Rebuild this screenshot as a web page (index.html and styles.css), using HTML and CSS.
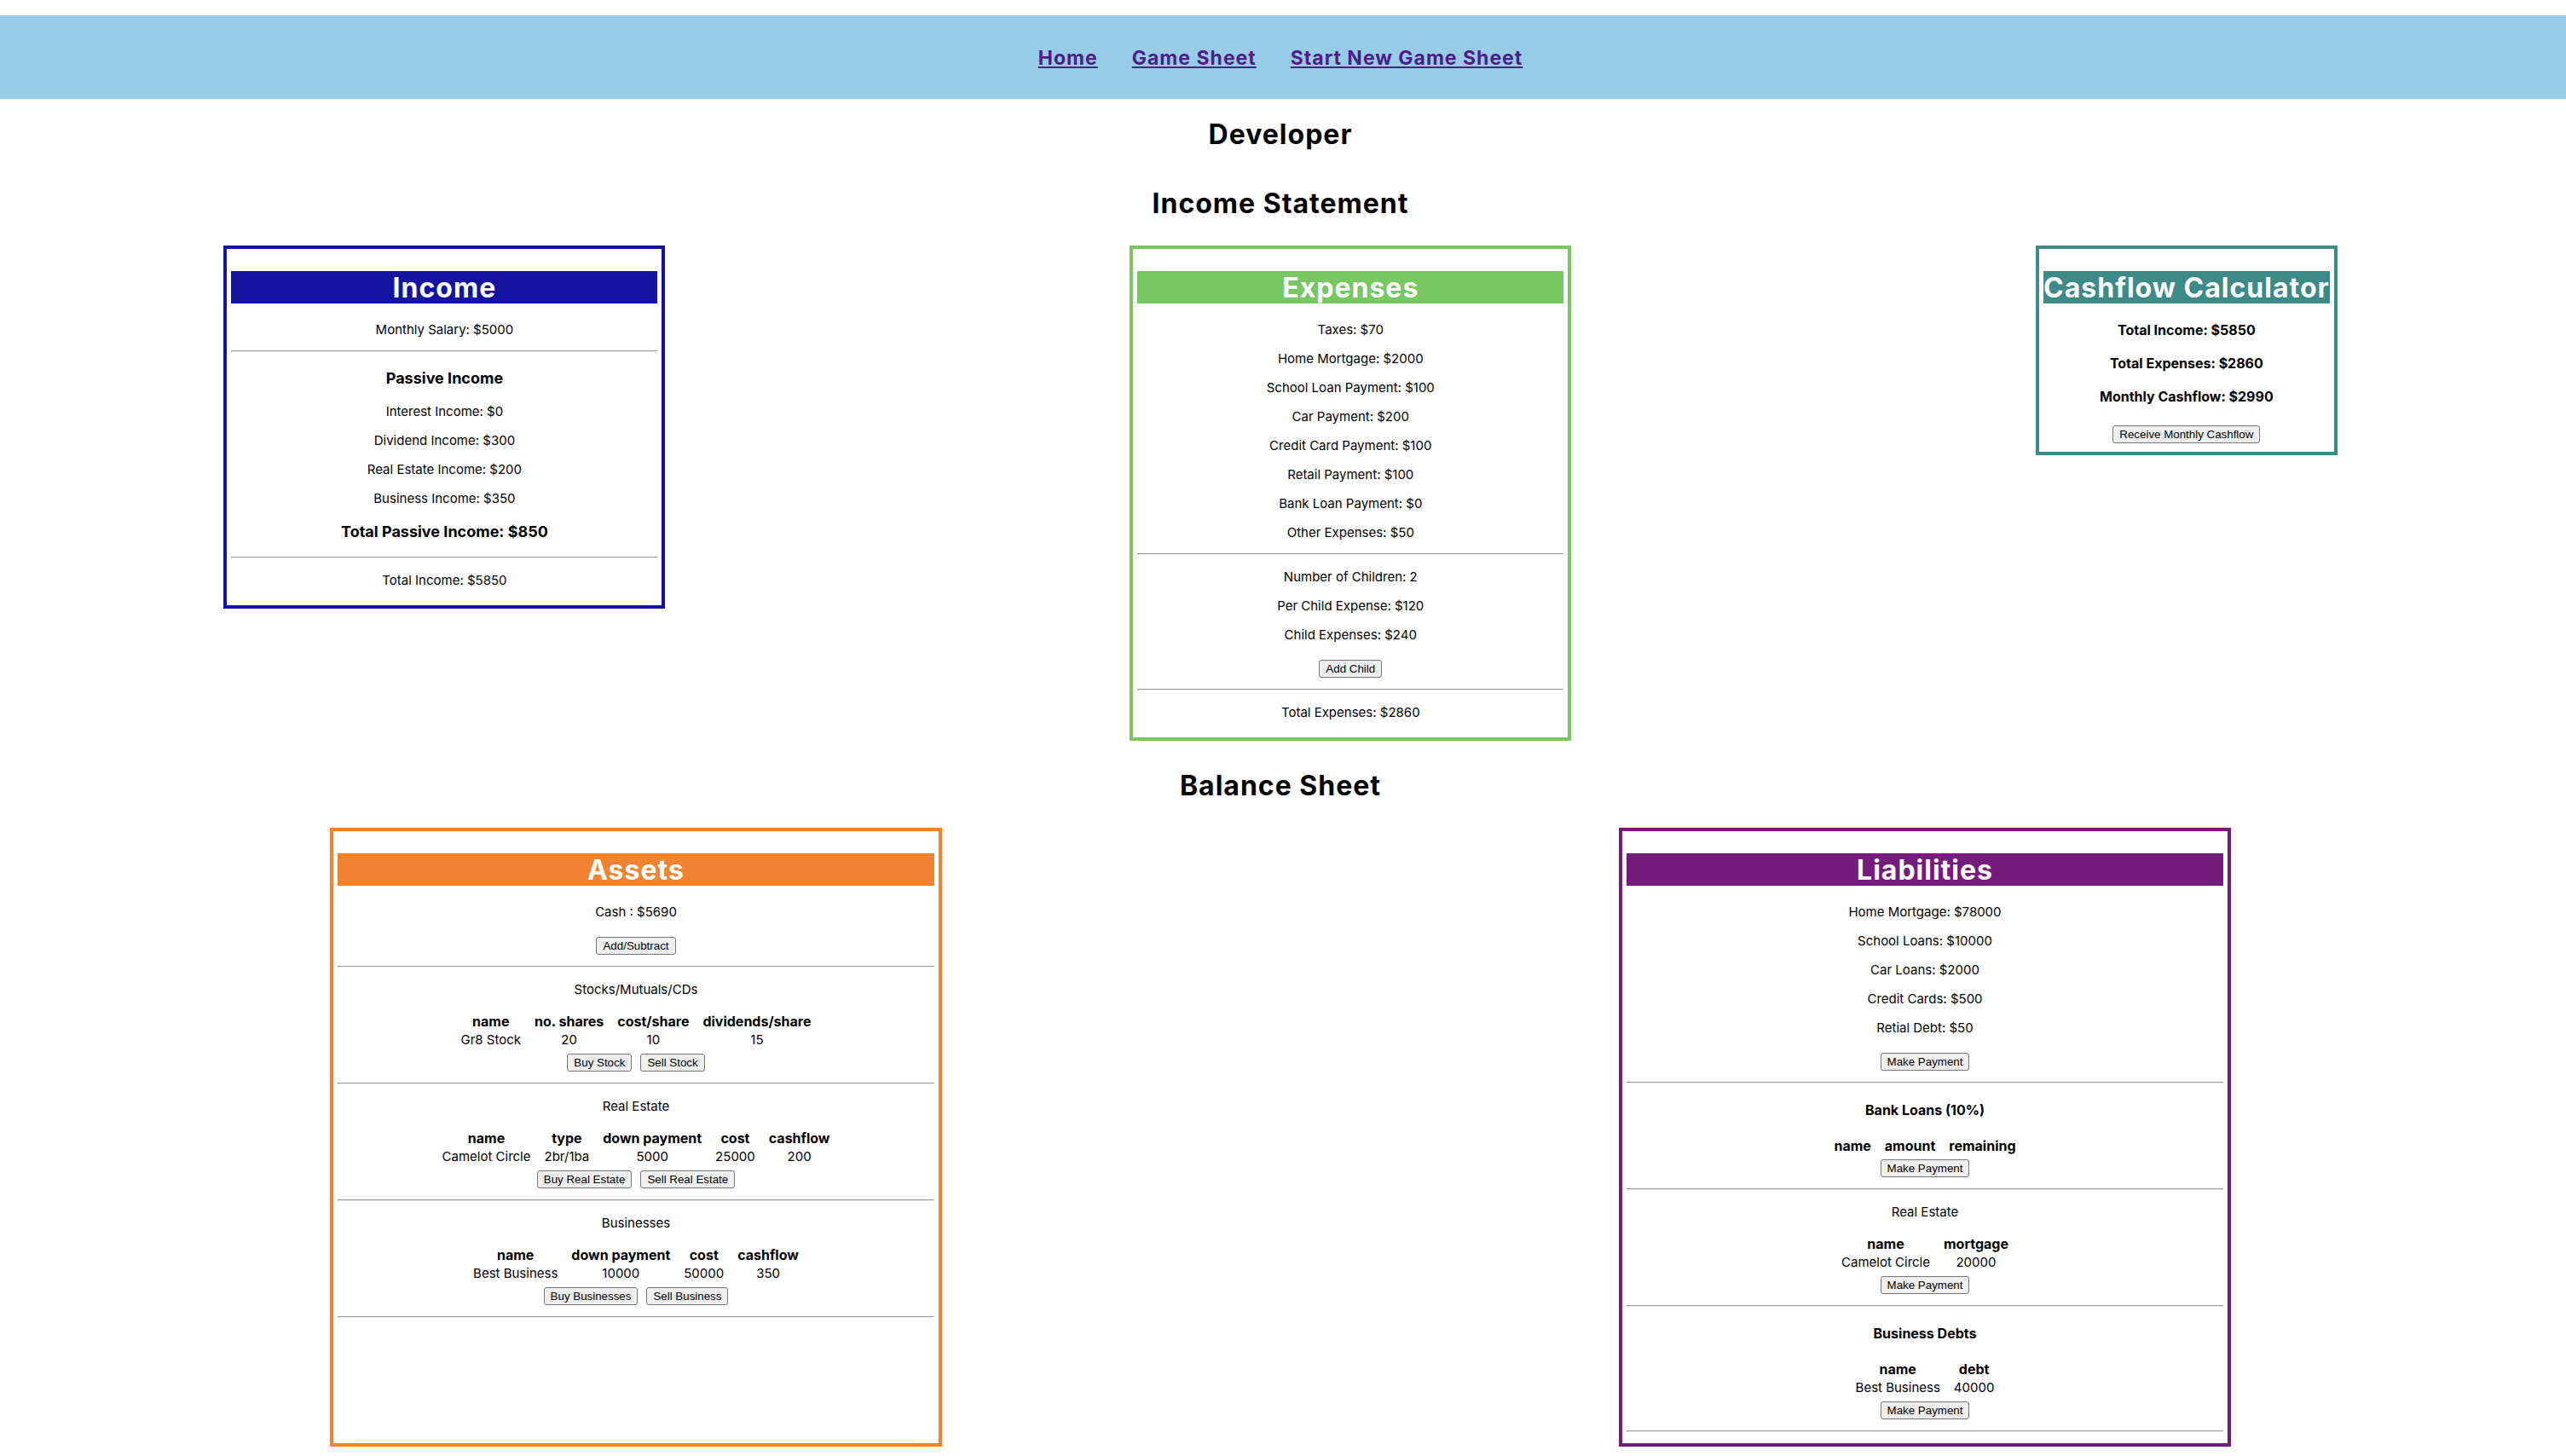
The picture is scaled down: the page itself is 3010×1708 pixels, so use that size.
FILE: index.html
```html
<!DOCTYPE html>
<html lang="en">
<head>
<meta charset="utf-8">
<title>Game Sheet</title>
<link rel="stylesheet" href="styles.css">
</head>
<body>
<div class="page">
  <nav class="nav">
    <a href="#home">Home</a>
    <a href="#sheet">Game Sheet</a>
    <a href="#new">Start New Game Sheet</a>
  </nav>
  <main class="sheet">
    <h1 class="title">Developer</h1>

    <h1 class="title">Income Statement</h1>
    <div class="row">
      <section class="card card-medium income">
        <h1>Income</h1>
        <p>Monthly Salary: $5000</p>
        <hr>
        <h3>Passive Income</h3>
        <p>Interest Income: $0</p>
        <p>Dividend Income: $300</p>
        <p>Real Estate Income: $200</p>
        <p>Business Income: $350</p>
        <h3>Total Passive Income: $850</h3>
        <hr>
        <p>Total Income: $5850</p>
      </section>

      <section class="card card-medium expenses">
        <h1>Expenses</h1>
        <p>Taxes: $70</p>
        <p>Home Mortgage: $2000</p>
        <p>School Loan Payment: $100</p>
        <p>Car Payment: $200</p>
        <p>Credit Card Payment: $100</p>
        <p>Retail Payment: $100</p>
        <p>Bank Loan Payment: $0</p>
        <p>Other Expenses: $50</p>
        <hr>
        <p>Number of Children: 2</p>
        <p>Per Child Expense: $120</p>
        <p>Child Expenses: $240</p>
        <div class="actions"><button type="button">Add Child</button></div>
        <hr>
        <p>Total Expenses: $2860</p>
      </section>

      <section class="card cashflow">
        <h1>Cashflow Calculator</h1>
        <h4>Total Income: $5850</h4>
        <h4>Total Expenses: $2860</h4>
        <h4>Monthly Cashflow: $2990</h4>
        <div class="actions"><button type="button">Receive Monthly Cashflow</button></div>
      </section>
    </div>

    <h1 class="title">Balance Sheet</h1>
    <div class="row row-stretch">
      <section class="card card-large assets">
        <h1>Assets</h1>
        <p>Cash : $5690</p>
        <div class="actions"><button type="button">Add/Subtract</button></div>
        <hr>
        <p>Stocks/Mutuals/CDs</p>
        <table>
          <thead><tr><th>name</th><th>no. shares</th><th>cost/share</th><th>dividends/share</th></tr></thead>
          <tbody><tr><td>Gr8 Stock</td><td>20</td><td>10</td><td>15</td></tr></tbody>
        </table>
        <div class="actions"><button type="button">Buy Stock</button><button type="button">Sell Stock</button></div>
        <hr>
        <p>Real Estate</p>
        <table>
          <thead><tr><th>name</th><th>type</th><th>down payment</th><th>cost</th><th>cashflow</th></tr></thead>
          <tbody><tr><td>Camelot Circle</td><td>2br/1ba</td><td>5000</td><td>25000</td><td>200</td></tr></tbody>
        </table>
        <div class="actions"><button type="button">Buy Real Estate</button><button type="button">Sell Real Estate</button></div>
        <hr>
        <p>Businesses</p>
        <table>
          <thead><tr><th>name</th><th>down payment</th><th>cost</th><th>cashflow</th></tr></thead>
          <tbody><tr><td>Best Business</td><td>10000</td><td>50000</td><td>350</td></tr></tbody>
        </table>
        <div class="actions"><button type="button">Buy Businesses</button><button type="button">Sell Business</button></div>
        <hr>
      </section>

      <section class="card card-large liabilities">
        <h1>Liabilities</h1>
        <p>Home Mortgage: $78000</p>
        <p>School Loans: $10000</p>
        <p>Car Loans: $2000</p>
        <p>Credit Cards: $500</p>
        <p>Retial Debt: $50</p>
        <div class="actions"><button type="button">Make Payment</button></div>
        <hr>
        <h4>Bank Loans (10%)</h4>
        <table>
          <thead><tr><th>name</th><th>amount</th><th>remaining</th></tr></thead>
        </table>
        <div class="actions"><button type="button">Make Payment</button></div>
        <hr>
        <p>Real Estate</p>
        <table>
          <thead><tr><th>name</th><th>mortgage</th></tr></thead>
          <tbody><tr><td>Camelot Circle</td><td>20000</td></tr></tbody>
        </table>
        <div class="actions"><button type="button">Make Payment</button></div>
        <hr>
        <h4>Business Debts</h4>
        <table>
          <thead><tr><th>name</th><th>debt</th></tr></thead>
          <tbody><tr><td>Best Business</td><td>40000</td></tr></tbody>
        </table>
        <div class="actions"><button type="button">Make Payment</button></div>
        <hr>
      </section>
    </div>
  </main>
</div>
</body>
</html>
```

FILE: styles.css
```css
body {
  margin: 0;
  overflow-x: hidden;
  background: #fff;
  color: #000;
  font: 16px/16px Inter, "Liberation Sans", sans-serif;
  text-align: center;
}

.page {
  margin: 0 -4px 0 -10px;
  padding-top: 18px;
}

.nav {
  display: flex;
  justify-content: center;
  gap: 40px;
  padding: 36px 0 34px;
  background: #97cbe8;
  font-size: 23px;
  font-weight: 700;
  line-height: 28px;
  letter-spacing: 1px;
}

.nav a {
  color: #4f1d87;
}

.sheet {
  display: flex;
  flex-direction: column;
}

h1,
h3,
h4,
p {
  padding-top: 2px;
}

h1 {
  margin: 21px 0;
  font-size: 32px;
  line-height: 36px;
  letter-spacing: 1px;
}

.title {
  margin-top: 22px;
}

h3 {
  margin: 19px 0;
  font-size: 18px;
  line-height: 20px;
}

h4 {
  margin: 21px 0;
}

p {
  margin: 16px 0;
  font-size: 15px;
}

hr {
  width: 100%;
  box-sizing: border-box;
  margin: 8px 0;
  border: 1px solid #9a9a9a;
  border-color: #9a9a9a #eee #eee #9a9a9a;
}

.row {
  display: flex;
  justify-content: space-around;
  align-items: flex-start;
  margin-bottom: 1px;
}

.row-stretch {
  align-items: stretch;
}

.card {
  margin: 10px;
  padding: 5px;
  border: 4px solid var(--tone);
}

.card h1 {
  background: var(--tone);
  color: #fff;
}

.card-medium {
  width: 500px;
}

.card-large {
  width: 700px;
}

.income { --tone: #14129f; }
.expenses { --tone: #77c763; }
.cashflow { --tone: #3e8a89; }
.assets { --tone: #f08432; }
.liabilities { --tone: #741c7b; }

table {
  margin: 0 auto;
  border-spacing: 2px;
}

th,
td {
  padding: 3px 7px 1px;
}

td {
  font-size: 15px;
}

.actions {
  display: flex;
  justify-content: center;
  gap: 10px;
  padding: 5px 0;
}

button {
  padding: 2px 7px;
  border: 1px solid #767676;
  border-radius: 3px;
  background: #efefef;
  color: #000;
  font-family: "Liberation Sans", Arial, sans-serif;
  line-height: 15px;
}
```
